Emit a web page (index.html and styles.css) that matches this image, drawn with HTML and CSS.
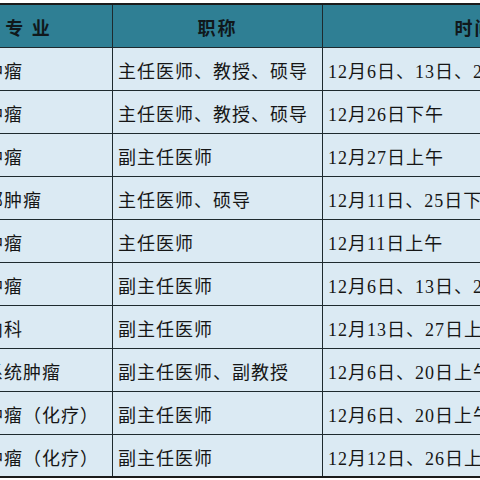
FILE: index.html
```html
<!DOCTYPE html>
<html lang="zh-CN">
<head>
<meta charset="utf-8">
<title>专家出诊时间</title>
<link rel="stylesheet" href="styles.css">
</head>
<body>
<table class="schedule">
  <colgroup>
    <col class="c-spec">
    <col class="c-title">
    <col class="c-time">
  </colgroup>
  <thead>
    <tr>
      <th>专 业</th>
      <th>职称</th>
      <th>时间</th>
    </tr>
  </thead>
  <tbody>
    <tr><td class="spec">乳腺肿瘤</td><td>主任医师、教授、硕导</td><td>12月6日、13日、20日、27日上午</td></tr>
    <tr><td class="spec">胸部肿瘤</td><td>主任医师、教授、硕导</td><td>12月26日下午</td></tr>
    <tr><td class="spec">妇科肿瘤</td><td>副主任医师</td><td>12月27日上午</td></tr>
    <tr><td class="spec">头颈部肿瘤</td><td>主任医师、硕导</td><td>12月11日、25日下午</td></tr>
    <tr><td class="spec">腹部肿瘤</td><td>主任医师</td><td>12月11日上午</td></tr>
    <tr><td class="spec">骨软肿瘤</td><td>副主任医师</td><td>12月6日、13日、20日上午</td></tr>
    <tr><td class="spec">肿瘤内科</td><td>副主任医师</td><td>12月13日、27日上午</td></tr>
    <tr><td class="spec">消化系统肿瘤</td><td>副主任医师、副教授</td><td>12月6日、20日上午</td></tr>
    <tr><td class="spec">乳腺肿瘤（化疗）</td><td>副主任医师</td><td>12月6日、20日上午</td></tr>
    <tr><td class="spec">胸部肿瘤（化疗）</td><td>副主任医师</td><td>12月12日、26日上午</td></tr>
  </tbody>
</table>
</body>
</html>
```

FILE: styles.css
```css
html, body {
  margin: 0;
  padding: 0;
  overflow: hidden;
  background: #ffffff;
}

body {
  padding-top: 3px;
  font-family: "Liberation Serif", "Noto Sans CJK SC", serif;
  color: #161616;
}

.schedule {
  margin-left: -56px;
  width: 682px;
  table-layout: fixed;
  border-collapse: collapse;
  border-top: 2px solid #1b1b1b;
  border-bottom: 2px solid #1b1b1b;
}

.c-spec { width: 168px; }
.c-title { width: 210px; }
.c-time { width: 304px; }

.schedule tr {
  height: 43px;
}

.schedule th,
.schedule td {
  border: 1px solid #1e2a2e;
  padding: 3px 0 0 5px;
  font-size: 18px;
  letter-spacing: 1px;
  white-space: nowrap;
  overflow: hidden;
  vertical-align: middle;
}

.schedule th {
  background: #2f7f94;
  color: #10181b;
  font-weight: bold;
  text-align: center;
  padding-left: 0;
  letter-spacing: 2px;
}

.schedule td {
  background: #dbeaf3;
  text-align: left;
  font-weight: normal;
}

.schedule td.spec {
  padding-left: 2px;
}
```
